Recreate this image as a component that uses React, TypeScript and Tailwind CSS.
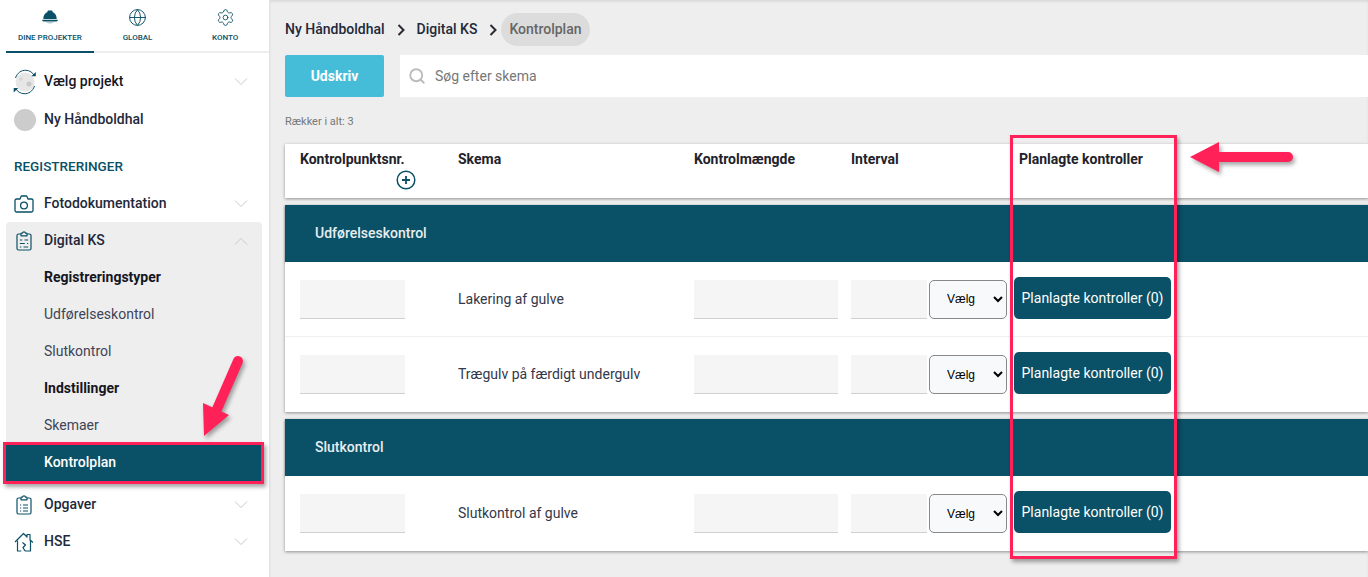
import { Globe, Search, Settings } from 'lucide-react';
import type { ReactNode } from 'react';

const stroke = '#0a5066';

function HardHat() {
  return (
    <svg width="16" height="14" viewBox="0 0 16 14" fill={stroke}>
      <path d="M1.300 9C1.300 5.300 3 2.800 5.500 1.900V1c0-.4.300-.6.600-.6h3.800c.3 0 .6.200.6.600v.9C13 2.800 14.700 5.300 14.700 9z" />
      <path d="M.7 9.700h14.600c.5 0 .7.400.5.800-.3.700-.9 1-1.800 1H2c-.9 0-1.500-.3-1.800-1-.2-.4 0-.8.500-.8z" />
      <path d="M4 12.200h8c-.8.700-2.300 1.200-4 1.200s-3.200-.5-4-1.200z" opacity="0.4" />
    </svg>
  );
}

function ProjectIcon() {
  return (
    <svg width="26" height="26" viewBox="0 0 26 26" fill="none">
      <circle cx="13" cy="13" r="9.500" fill="#e6e6e6" />
      <circle cx="17" cy="15" r="2.500" fill="#c9c9c9" />
      <circle cx="9" cy="10" r="1.700" fill="#d4d4d4" />
      <path d="M3.500 9C5.200 3.800 9.500 1 14 1.300c3.800.2 6.500 2.200 8.200 5" stroke={stroke} strokeWidth="1" />
      <path d="M23.800 3v4.300h-4.300z" fill={stroke} />
      <path d="M22.500 17C20.800 22.200 16.500 25 12 24.700c-3.800-.2-6.500-2.200-8.200-5" stroke={stroke} strokeWidth="1" />
      <path d="M1.700 23.500v-4.600h4.500z" fill={stroke} />
    </svg>
  );
}

function CameraIcon() {
  return (
    <svg width="20" height="18" viewBox="0 0 20 18" fill="none" stroke={stroke} strokeWidth="1.300" strokeLinejoin="round">
      <path d="M2.500 4H6l1-2.500c.1-.3.400-.5.700-.5h4.600c.3 0 .6.200.7.500L14 4h3.500c.8 0 1.500.7 1.500 1.500v10c0 .8-.7 1.500-1.500 1.500h-15C1.700 17 1 16.300 1 15.500v-10C1 4.700 1.700 4 2.500 4z" />
      <circle cx="10" cy="10.500" r="3.400" />
    </svg>
  );
}

function ClipboardIcon({ dashes }: { dashes?: boolean }) {
  return (
    <svg width="16" height="20" viewBox="0 0 16 20" fill="none" stroke={stroke} strokeWidth="1.200" strokeLinejoin="round">
      <path d="M5 3H2.500C1.700 3 1 3.700 1 4.500v13c0 .8.700 1.500 1.500 1.500h11c.8 0 1.500-.7 1.500-1.500v-13C15 3.700 14.300 3 13.500 3H11" />
      <path d="M5 4.800V3c0-.5.400-.8.800-.8H6.500C6.700 1.300 7.300.8 8 .8s1.300.5 1.500 1.400h.7c.4 0 .8.300.8.800v1.800z" />
      {dashes ? (
        <path d="M3.800 9h2.500M8.500 9h3.700M3.800 12.500h5M11 12.500h1.200M3.800 16h1.500M7.500 16h4.700" />
      ) : (
        <path d="M4 10h1.200M7 10h5M4 13h1.200M7 13h5M4 16h1.200M7 16h5" />
      )}
    </svg>
  );
}

function HouseIcon() {
  return (
    <svg width="20" height="20" viewBox="0 0 20 20" fill="none" stroke={stroke} strokeWidth="1.200" strokeLinejoin="round">
      <path d="M1 10 9.500 1.500 13 5V2.500h3V8l3 2.500" />
      <path d="M3.500 8.500V19h3.800M11 19h5.500V8" />
      <path d="M8.500 10.500 11.500 13 9 15.500l2 3.500" />
    </svg>
  );
}

function Chevron({ up }: { up?: boolean }) {
  return (
    <svg width="14" height="8" viewBox="0 0 14 8" fill="none" stroke="#c8c8c8" strokeWidth="1">
      <path d={up ? 'M1 7.500 7 1.500l6 6' : 'M1 .5l6 6 6-6'} />
    </svg>
  );
}

function Tab({ label, icon, active }: { label: string; icon: ReactNode; active?: boolean }) {
  return (
    <div className={`flex w-[88px] flex-col items-center border-b-2 pt-[8px] pb-[8px] ${active ? 'border-[#0a5066]' : 'border-[#eeeeee]'}`}>
      <div className="flex h-[18px] items-center">{icon}</div>
      <div className="mt-[7px] text-[8px] leading-[10px] font-medium text-[#0a5066]">{label}</div>
    </div>
  );
}

function NavRow({ icon, label, open }: { icon: ReactNode; label: string; open?: boolean }) {
  return (
    <div className="flex h-[37px] items-center pr-[21px] pl-[14px]">
      <div className="mr-[10px] flex w-[20px] justify-center">{icon}</div>
      <div className="flex-1 text-[14px] font-medium text-[#22283a]">{label}</div>
      <Chevron up={open} />
    </div>
  );
}

function SubRow({ label, bold }: { label: string; bold?: boolean }) {
  return (
    <div className={`flex h-[37px] items-center pl-[38px] text-[14px] ${bold ? 'font-bold text-[#16161f]' : 'text-[#3f4456]'}`}>
      {label}
    </div>
  );
}

function Sidebar() {
  return (
    <aside className="w-[270px] shrink-0 border-r border-[#e2e2e2] bg-white">
      <div className="flex pl-[6px]">
        <Tab label="DINE PROJEKTER" active icon={<HardHat />} />
        <Tab label="GLOBAL" icon={<Globe size={19} strokeWidth={1.200} color={stroke} />} />
        <Tab label="KONTO" icon={<Settings size={19} strokeWidth={1.100} color={stroke} />} />
      </div>
      <div className="mt-[9px] flex h-[39px] items-center pr-[21px] pl-[12px]">
        <div className="w-[32px]"><ProjectIcon /></div>
        <div className="flex-1 text-[14px] font-medium text-[#16161f]">Vælg projekt</div>
        <Chevron />
      </div>
      <div className="flex h-[37px] items-center pl-[14px]">
        <div className="mr-[8px] h-[22px] w-[22px] rounded-full bg-[#cccccc]" />
        <div className="text-[14px] font-medium text-[#22283a]">Ny Håndboldhal</div>
      </div>
      <div className="mt-[18px] pl-[14px] text-[13.500px] leading-[20px] font-medium text-[#0a5066]">REGISTRERINGER</div>
      <div className="mt-[9px]">
        <NavRow icon={<CameraIcon />} label="Fotodokumentation" />
      </div>
      <div className="mr-[7px] ml-[6px] rounded-t-[4px] bg-[#eeeeee]">
        <div className="-mr-[7px] -ml-[6px]">
          <NavRow icon={<ClipboardIcon dashes />} label="Digital KS" open />
        </div>
        <SubRow label="Registreringstyper" bold />
        <SubRow label="Udførelseskontrol" />
        <SubRow label="Slutkontrol" />
        <SubRow label="Indstillinger" bold />
        <SubRow label="Skemaer" />
        <div className="flex h-[37px] items-center bg-[#0a5066] pl-[38px] text-[14px] font-medium text-white">Kontrolplan</div>
      </div>
      <div className="mt-[5px]">
        <NavRow icon={<ClipboardIcon />} label="Opgaver" />
        <NavRow icon={<HouseIcon />} label="HSE" />
      </div>
    </aside>
  );
}

function Crumb({ label }: { label: string }) {
  return <span className="text-[14px] font-medium text-[#22283a]">{label}</span>;
}

function CrumbArrow() {
  return (
    <svg width="10" height="12" viewBox="0 0 10 12" fill="none" stroke="#2b2b33" strokeWidth="2" className="mx-[11px]">
      <path d="M2.500 1 7.500 6l-5 5" />
    </svg>
  );
}

const columns = 'grid grid-cols-[158px_236px_157px_163px_1fr]';

function Field({ width }: { width: string }) {
  return <div className={`h-[39px] border-b border-[#d0d0d0] bg-[#f5f5f5] ${width}`} />;
}

function TableRow({ name, last }: { name: string; last?: boolean }) {
  return (
    <div className={`${columns} h-[75px] items-center bg-white pl-[15px] ${last ? '' : 'border-b border-[#f0f0f0]'}`}>
      <Field width="w-[105px]" />
      <div className="text-[14px] text-[#33384a]">{name}</div>
      <Field width="w-[144px]" />
      <div className="flex items-center">
        <Field width="w-[76px]" />
        <select className="ml-[2px] h-[39px] w-[78px] rounded-[5px] border border-[#888888] bg-[#f8f9fa] pl-[13px] font-['Liberation_Sans',sans-serif] text-[12px] text-black">
          <option>Vælg</option>
        </select>
      </div>
      <div className={`flex h-[42px] w-[157px] items-center justify-center rounded-[5px] bg-[#0a5066] text-[14px] whitespace-nowrap text-white ${last ? '-mt-[3px]' : '-mt-[2px]'}`}>
        Planlagte kontroller (0)
      </div>
    </div>
  );
}

function Banner({ label }: { label: string }) {
  return (
    <div className="flex h-[57px] items-center bg-[#0a5066] pl-[30px] text-[14px] font-medium text-[#e8eef0] shadow-[0_1px_2px_rgba(0,0,0,0.3)]">
      {label}
    </div>
  );
}

function Annotations() {
  return (
    <>
      <div className="absolute top-[442px] left-[3px] h-[42px] w-[261px] border-[3px] border-[#ff2158] shadow-[2px_3px_4px_rgba(0,0,0,0.35)]" />
      <div className="absolute top-[135px] left-[1010px] h-[424px] w-[167px] border-[3px] border-[#ff2158] shadow-[2px_3px_4px_rgba(0,0,0,0.35)]" />
      <svg className="absolute top-0 left-0 drop-shadow-[2px_3px_2px_rgba(0,0,0,0.35)]" width="1368" height="577" fill="#ff2158">
        <path d="M238 361 214 416" stroke="#ff2158" strokeWidth="10" strokeLinecap="round" />
        <path d="M203 403 229 415 204 436z" />
        <path d="M1288 157H1212" stroke="#ff2158" strokeWidth="10" strokeLinecap="round" />
        <path d="M1190 157 1219 142V172z" />
      </svg>
    </>
  );
}

export default function App() {
  return (
    <div className="relative flex h-[577px] w-[1368px] overflow-hidden bg-[#eeeeee] font-['Roboto',sans-serif]">
      <Sidebar />
      <main className="min-w-0 flex-1 pt-[13px] pl-[15px] shadow-[inset_0_2px_2px_rgba(0,0,0,0.08)]">
        <div className="flex h-[33px] items-center">
          <Crumb label="Ny Håndboldhal" />
          <CrumbArrow />
          <Crumb label="Digital KS" />
          <CrumbArrow />
          <span className="-ml-[8px] flex h-[33px] items-center rounded-full bg-[#dcdcdc] px-[8px] text-[14px] font-medium text-[#666666]">Kontrolplan</span>
        </div>
        <div className="mt-[9px] flex h-[42px]">
          <div className="flex w-[99px] items-center justify-center rounded-[2px] bg-[#45bcd8] text-[14px] font-bold text-white">Udskriv</div>
          <div className="ml-[16px] flex flex-1 items-center bg-white pl-[10px] text-[14px] text-[#777777]">
            <Search size={18} strokeWidth={2.500} className="mr-[9px] -ml-[2px] text-[#bbbbbb]" />
            Søg efter skema
          </div>
        </div>
        <div className="mt-[18px] text-[11px] leading-[13px] text-[#777777]">Rækker i alt: 3</div>
        <div className={`${columns} mt-[16px] h-[54px] bg-white pt-[7px] pl-[15px] text-[14px] font-bold text-[#22222a] shadow-[0_1px_3px_rgba(0,0,0,0.4)]`}>
          <div className="flex w-[105px] flex-col">
            <span className="leading-[16px] whitespace-nowrap">Kontrolpunktsnr.</span>
            <svg width="20" height="20" viewBox="0 0 20 20" fill="none" stroke={stroke} className="mt-[3px] ml-[96px]">
              <circle cx="10" cy="10" r="8.800" strokeWidth="1.500" />
              <path d="M10 6v8M6 10h8" strokeWidth="1.800" />
            </svg>
          </div>
          <div className="leading-[16px]">Skema</div>
          <div className="leading-[16px]">Kontrolmængde</div>
          <div className="leading-[16px]">Interval</div>
          <div className="pl-[5px] leading-[16px]">Planlagte kontroller</div>
        </div>
        <div className="mt-[7px] shadow-[0_1px_3px_rgba(0,0,0,0.4)]">
          <Banner label="Udførelseskontrol" />
          <TableRow name="Lakering af gulve" />
          <TableRow name="Trægulv på færdigt undergulv" last />
        </div>
        <div className="mt-[7px] shadow-[0_1px_3px_rgba(0,0,0,0.4)]">
          <Banner label="Slutkontrol" />
          <TableRow name="Slutkontrol af gulve" last />
        </div>
      </main>
      <Annotations />
    </div>
  );
}
